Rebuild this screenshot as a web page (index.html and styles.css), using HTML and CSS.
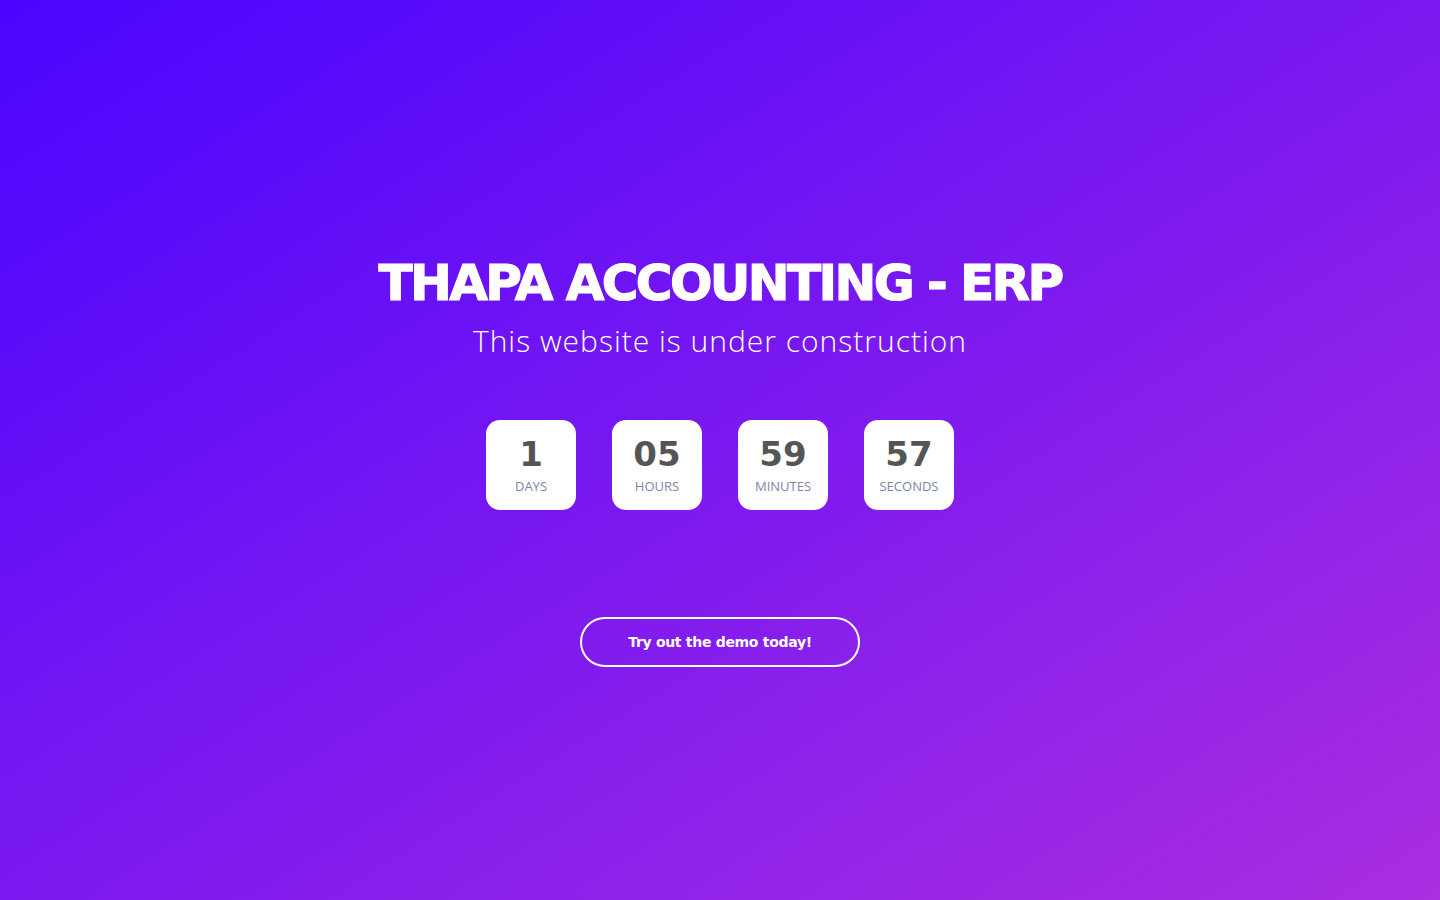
FILE: index.html
```html
<!DOCTYPE html>
<html lang="en">
<head>
<meta charset="utf-8">
<title>Thapa Accounting - ERP</title>
<link rel="stylesheet" href="styles.css">
</head>
<body>
<main class="page">
  <h1 class="title">THAPA ACCOUNTING - ERP</h1>
  <p class="subtitle">This website is under construction</p>
  <div class="countdown">
    <div class="unit"><span class="num">1</span><span class="label">DAYS</span></div>
    <div class="unit"><span class="num">05</span><span class="label">HOURS</span></div>
    <div class="unit"><span class="num">59</span><span class="label">MINUTES</span></div>
    <div class="unit"><span class="num">57</span><span class="label">SECONDS</span></div>
  </div>
  <a class="demo-btn" href="#">Try out the demo today!</a>
</main>
</body>
</html>
```
FILE: styles.css
```css
html, body {
  margin: 0;
  padding: 0;
  height: 100%;
}
body {
  background: linear-gradient(to bottom right, #4a04ff 0%, #ab2ee0 100%);
  font-family: "DejaVu Sans", sans-serif;
  color: #fff;
  overflow: hidden;
}
.page {
  height: 100vh;
  box-sizing: border-box;
  display: flex;
  flex-direction: column;
  align-items: center;
  padding-top: 252px;
}
.title {
  margin: 0;
  font-family: "DejaVu Sans", sans-serif;
  font-weight: 700;
  font-size: 50px;
  line-height: 62px;
  letter-spacing: -2.6px;
  -webkit-text-stroke: 1.2px #fff;
}
.subtitle {
  margin: 0;
  font-family: "Open Sans", sans-serif;
  font-weight: 300;
  font-size: 30px;
  line-height: 54px;
  letter-spacing: 1px;
}
.countdown {
  display: flex;
  gap: 36px;
  margin-top: 52px;
}
.unit {
  width: 90px;
  height: 90px;
  background: #fff;
  border-radius: 14px;
  display: flex;
  flex-direction: column;
  align-items: center;
  padding-top: 14px;
  box-sizing: border-box;
}
.num {
  font-family: "DejaVu Sans", sans-serif;
  font-weight: 700;
  font-size: 34px;
  line-height: 40px;
  color: #555555;
}
.label {
  font-family: "Open Sans", sans-serif;
  font-size: 13px;
  line-height: 16px;
  margin-top: 4px;
  color: #7a87a6;
}
.demo-btn {
  margin-top: 107px;
  width: 280px;
  height: 50px;
  box-sizing: border-box;
  border: 2px solid #fff;
  border-radius: 25px;
  display: flex;
  align-items: center;
  justify-content: center;
  color: #fff;
  text-decoration: none;
  font-family: "DejaVu Sans", sans-serif;
  font-weight: 700;
  font-size: 14px;
  letter-spacing: -0.3px;
}
```
